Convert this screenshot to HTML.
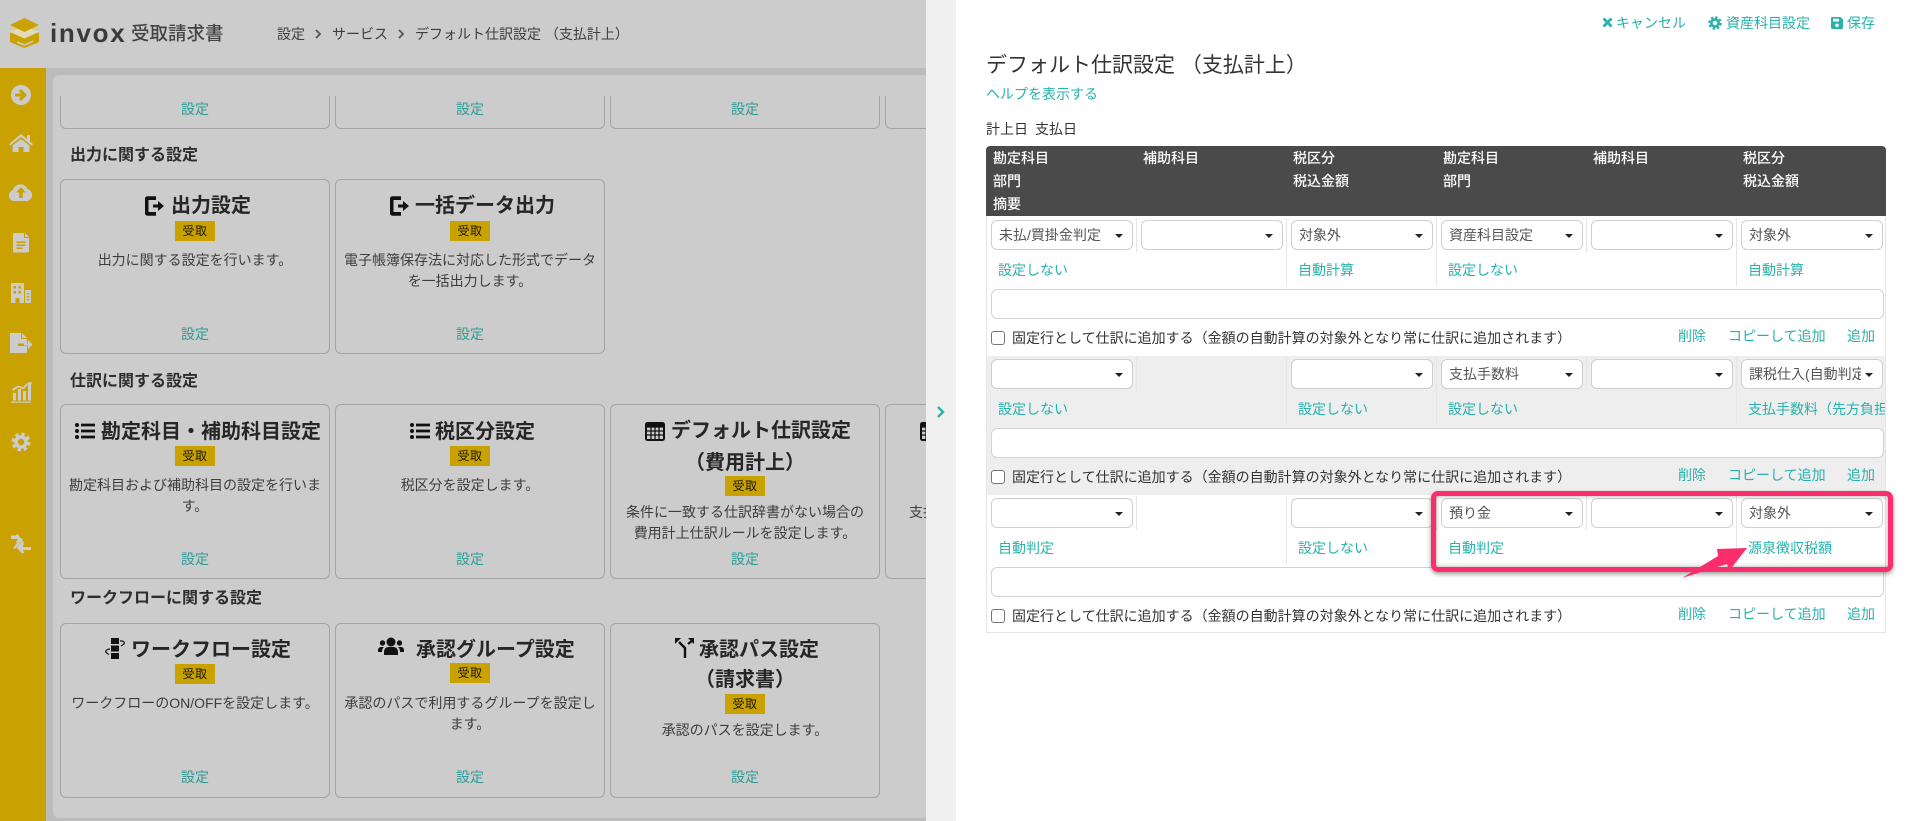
<!DOCTYPE html>
<html lang="ja"><head><meta charset="utf-8"><title>デフォルト仕訳設定</title>
<style>
*{box-sizing:border-box}
html,body{margin:0;padding:0}
body{width:1913px;height:821px;overflow:hidden;position:relative;background:#fff;font-family:"Liberation Sans","Noto Sans CJK JP",sans-serif;font-size:14px;color:#333}
body div,body span.a,body svg.a{position:absolute}
.t{white-space:nowrap;line-height:20px;height:20px}
.card{width:270px;border:1px solid #a3a3a3;border-radius:6px}
.top{border-top:0;border-radius:0 0 6px 6px}
.h{font-size:16px;font-weight:700;color:#2e2e2e;white-space:nowrap;line-height:24px}
.ti{font-size:20px;font-weight:700;color:#262626;white-space:nowrap;line-height:30px}
.ctr{text-align:center;width:270px}
.ba{width:40px;height:20px;background:#c9a200;color:#1c1800;font-size:12px;line-height:20px;text-align:center;letter-spacing:.5px}
.de{font-size:14px;line-height:21px;color:#3d3d3d;text-align:center;width:270px;white-space:nowrap}
.ln{font-size:14px;line-height:20px;color:#2d9c97;text-align:center;width:270px}
.l{color:#27b2ab;font-size:14px;line-height:20px;white-space:nowrap}
.s{width:142px;height:30px;background:#fff;border:1px solid #cfcfcf;border-radius:6px;color:#555;line-height:29px;padding-left:7px;white-space:nowrap;overflow:hidden}
.s::after{content:"";position:absolute;right:9px;top:13px;border-left:4px solid transparent;border-right:4px solid transparent;border-top:4.500px solid #222}
.in{left:991px;width:893px;height:30px;background:#fff;border:1px solid #cfd3d6;border-radius:6px}
.cb{left:991px;width:14px;height:14px;background:#fff;border:1px solid #767676;border-radius:3px}
.lb{left:1012px;white-space:nowrap;line-height:20px;color:#333}
.sp{width:1px;background:#e6e6e6}
.hd{color:#fff;font-weight:500;line-height:20px;white-space:nowrap}
</style></head><body>

<!-- left dimmed page -->
<div style="left:0;top:0;width:926px;height:821px;background:#ccc;overflow:hidden">
  <div style="left:0;top:68px;width:926px;height:753px;background:#bbb"></div>
  <div style="left:0;top:68px;width:46px;height:753px;background:#c9a100"></div>
  <div style="left:53px;top:75px;width:900px;height:743px;background:#ccc;border-radius:6px 0 0 6px"></div>

  <!-- logo -->
  <svg class="a" style="left:8px;top:15px" width="36" height="36" viewBox="8 15 36 36">
    <path d="M10 33l14.5-6 14.5 6v9l-14.5 6-14.5-6z" fill="#c9a100"/>
    <path d="M10 29l14.500-6.500L39 29l-14.500 7z" fill="#d9c98a"/>
    <path d="M10 32l14.500-6L39 32l-14.500 6.500z" fill="#e2dbb8"/>
    <path d="M10 25l14.500-7L39 25l-14.500 7z" fill="#c9a100"/>
    <path d="M17 42l7.500 3 9-4" fill="none" stroke="#ccc" stroke-width="1.500"/>
  </svg>
  <div class="t" style="left:50px;top:16px;font-size:26px;line-height:34px;height:34px;font-weight:700;color:#3a3a3a;letter-spacing:1.700px">invox</div>
  <div class="t" style="left:131px;top:22px;font-size:18.500px;line-height:24px;height:24px;color:#444;font-weight:500">受取請求書</div>
  <div class="t" style="left:277px;top:24px;color:#3d3d3d">設定</div>
  <div class="t" style="left:332px;top:24px;color:#3d3d3d">サービス</div>
  <div class="t" style="left:415px;top:24px;color:#3d3d3d">デフォルト仕訳設定 （支払計上）</div>
  <svg class="a" style="left:314px;top:28px" width="8" height="12" viewBox="0 0 8 12"><path d="M2 2l4 4-4 4" fill="none" stroke="#555" stroke-width="1.800"/></svg>
  <svg class="a" style="left:397px;top:28px" width="8" height="12" viewBox="0 0 8 12"><path d="M2 2l4 4-4 4" fill="none" stroke="#555" stroke-width="1.800"/></svg>

  <!-- sidebar icons -->
  <svg class="a" style="left:0;top:68px" width="46" height="500" viewBox="0 68 46 500">
    <g fill="#ccc">
      <path fill-rule="evenodd" d="M21 85a10 10 0 1 0 0 20 10 10 0 0 0 0-20zM21 89l6 6-6 6-2-2 2-2.500h-6v-3h6l-2-2.500z"/>
      <path d="M21 134l6 5v-4h3v6.500l3 2.500-1.300 1.500L21 137l-10.700 8.500L9 144z"/>
      <path d="M21 139l8.500 6.500V152h-6v-5h-5v5h-6v-6.500z"/>
      <path fill-rule="evenodd" d="M14 201a5.500 5.500 0 0 1-1.500-10.700A8 8 0 0 1 27.500 189a6.200 6.200 0 0 1 0 12zM21 187l-5 5.500h3.200v5.500h3.600v-5.500H26z"/>
      <path fill-rule="evenodd" d="M14.500 233H24v5h5v13a1.500 1.500 0 0 1-1.500 1.500h-13A1.500 1.500 0 0 1 13 251v-16.500a1.500 1.500 0 0 1 1.500-1.500zM16.500 241.500v1.500h9v-1.500zM16.500 244.500v1.500h9v-1.500zM16.500 247.500v1.500h6v-1.500z"/>
      <path d="M25 233l4 4h-4z"/>
      <path fill-rule="evenodd" d="M11 283h13v20h-4.500v-5h-4v5H11zM13.500 286v2.500H16V286zM18.500 286v2.500H21V286zM13.500 291v2.500H16V291zM18.500 291v2.500H21V291z"/>
      <path fill-rule="evenodd" d="M25 290h6v13h-6zM26.800 293v1.400h2.400V293zM26.800 296v1.400h2.400V296zM26.800 299v1.400h2.400V299z"/>
      <path d="M10 333h11v6h6v4.500h-9v2.500h9v7H10z"/>
      <path d="M22 333l5 5h-5zM24 343.500h4V340l4.500 4.500L28 349v-3.500h-4z"/>
      <path d="M11 401.500h20v1.200H11zM13 393h3v7.500h-3zM18 389h3v11.500h-3zM23 391h3v9.500h-3zM28 385h3v15.500h-3z"/>
      <path d="M12 389l6-3.500 5 1.800 5-4.800 1 1.200-5.700 5.500-5-1.800L13 391z"/>
      <circle cx="30" cy="383.500" r="1.700"/>
      <path d="M11 535.500v3.500h7l-2.500 3.500h4l4-.5-6-8-2 1.500zM31 547v3h-8l1 3-2 .5-5.500-6 5.500-6 2 1-1 4.500z"/>
      <path d="M13 548l8-10 2 1-8 10z"/>
    </g>
    <circle cx="21" cy="442" r="7.800" fill="none" stroke="#ccc" stroke-width="3.400" stroke-dasharray="3.400 2.730"/>
    <circle cx="21" cy="442" r="5" fill="none" stroke="#ccc" stroke-width="3.600"/>
  </svg>

  <!-- row 0 -->
  <div class="card top" style="left:60px;top:96px;height:33px"></div>
  <div class="card top" style="left:335px;top:96px;height:33px"></div>
  <div class="card top" style="left:610px;top:96px;height:33px"></div>
  <div class="card top" style="left:885px;top:96px;height:33px"></div>
  <div class="ln" style="left:60px;top:99px">設定</div>
  <div class="ln" style="left:335px;top:99px">設定</div>
  <div class="ln" style="left:610px;top:99px">設定</div>

  <!-- output section -->
  <div class="h" style="left:70px;top:144px">出力に関する設定</div>
  <div class="card" style="left:60px;top:179px;height:175px"></div>
  <div class="card" style="left:335px;top:179px;height:175px"></div>
  <svg class="a" style="left:145px;top:196px" width="20" height="20" viewBox="0 0 20 20"><path d="M11 1.500H2.500a1.500 1.500 0 0 0-1.500 1.500v14a1.500 1.500 0 0 0 1.500 1.500H11" fill="#111" stroke="#111" stroke-width="2.400"/><path d="M3.500 4h8v12h-8z" fill="#ccc"/><path d="M8 8.500h5V5l6 5-6 5v-3.500H8z" fill="#111"/></svg>
  <div class="ti" style="left:171px;top:191px">出力設定</div>
  <svg class="a" style="left:390px;top:196px" width="20" height="20" viewBox="0 0 20 20"><path d="M11 1.500H2.500a1.500 1.500 0 0 0-1.500 1.500v14a1.500 1.500 0 0 0 1.500 1.500H11" fill="#111" stroke="#111" stroke-width="2.400"/><path d="M3.500 4h8v12h-8z" fill="#ccc"/><path d="M8 8.500h5V5l6 5-6 5v-3.500H8z" fill="#111"/></svg>
  <div class="ti" style="left:415px;top:191px">一括データ出力</div>
  <div class="ba" style="left:175px;top:221px">受取</div>
  <div class="ba" style="left:450px;top:221px">受取</div>
  <div class="de" style="left:60px;top:250px">出力に関する設定を行います。</div>
  <div class="de" style="left:335px;top:250px">電子帳簿保存法に対応した形式でデータ<br>を一括出力します。</div>
  <div class="ln" style="left:60px;top:324px">設定</div>
  <div class="ln" style="left:335px;top:324px">設定</div>

  <!-- journal section -->
  <div class="h" style="left:70px;top:370px">仕訳に関する設定</div>
  <div class="card" style="left:60px;top:404px;height:175px"></div>
  <div class="card" style="left:335px;top:404px;height:175px"></div>
  <div class="card" style="left:610px;top:404px;height:175px"></div>
  <div class="card" style="left:885px;top:404px;height:175px"></div>
  <svg class="a" style="left:75px;top:423px" width="20" height="16" viewBox="0 0 20 16"><path fill="#111" d="M0 2a2 2 0 1 1 4 0 2 2 0 0 1-4 0zM0 8a2 2 0 1 1 4 0 2 2 0 0 1-4 0zM0 14a2 2 0 1 1 4 0 2 2 0 0 1-4 0z"/><path fill="#111" d="M6 .6h14v2.800H6zM6 6.600h14v2.800H6zM6 12.600h14v2.800H6z"/></svg>
  <div class="ti" style="left:101px;top:417px">勘定科目・補助科目設定</div>
  <svg class="a" style="left:410px;top:423px" width="20" height="16" viewBox="0 0 20 16"><path fill="#111" d="M0 2a2 2 0 1 1 4 0 2 2 0 0 1-4 0zM0 8a2 2 0 1 1 4 0 2 2 0 0 1-4 0zM0 14a2 2 0 1 1 4 0 2 2 0 0 1-4 0z"/><path fill="#111" d="M6 .6h14v2.800H6zM6 6.600h14v2.800H6zM6 12.600h14v2.800H6z"/></svg>
  <div class="ti" style="left:435px;top:417px">税区分設定</div>
  <svg class="a" style="left:645px;top:421px" width="20" height="20" viewBox="0 0 20 20"><rect x="0" y="1" width="20" height="19" rx="2.500" fill="#111"/><path d="M2 6h16v12H2z" fill="#ccc"/><path d="M2 6h16M2 10h16M2 14h16M6 6v12M10 6v12M14 6v12" stroke="#111" stroke-width="1.300"/></svg>
  <div class="ti" style="left:671px;top:416px">デフォルト仕訳設定</div>
  <div class="ti ctr" style="left:610px;top:448px">（費用計上）</div>
  <svg class="a" style="left:920px;top:421px" width="20" height="20" viewBox="0 0 20 20"><rect x="0" y="1" width="20" height="19" rx="2.500" fill="#111"/><path d="M2 6h16v12H2z" fill="#ccc"/><path d="M2 6h16M2 10h16M2 14h16M6 6v12M10 6v12M14 6v12" stroke="#111" stroke-width="1.300"/></svg>
  <div class="ba" style="left:175px;top:446px">受取</div>
  <div class="ba" style="left:450px;top:446px">受取</div>
  <div class="ba" style="left:725px;top:476px">受取</div>
  <div class="de" style="left:60px;top:475px">勘定科目および補助科目の設定を行いま<br>す。</div>
  <div class="de" style="left:335px;top:475px">税区分を設定します。</div>
  <div class="de" style="left:610px;top:502px">条件に一致する仕訳辞書がない場合の<br>費用計上仕訳ルールを設定します。</div>
  <div class="t" style="left:909px;top:502px;color:#3d3d3d">支払</div>
  <div class="ln" style="left:60px;top:549px">設定</div>
  <div class="ln" style="left:335px;top:549px">設定</div>
  <div class="ln" style="left:610px;top:549px">設定</div>

  <!-- workflow section -->
  <div class="h" style="left:70px;top:587px">ワークフローに関する設定</div>
  <div class="card" style="left:60px;top:623px;height:175px"></div>
  <div class="card" style="left:335px;top:623px;height:175px"></div>
  <div class="card" style="left:610px;top:623px;height:175px"></div>
  <svg class="a" style="left:104px;top:638px" width="22" height="21" viewBox="0 0 22 21"><path fill="#111" d="M7 0h8v6H7zM7 7.500h8v6H7zM7 15h8v6H7z"/><path d="M16 3c3-.5 5 1 4 3l-3 2M6 11c-3 0-5 2-4 3.500l3 2" fill="none" stroke="#111" stroke-width="1.200"/></svg>
  <div class="ti" style="left:131px;top:635px">ワークフロー設定</div>
  <svg class="a" style="left:378px;top:637px" width="26" height="19" viewBox="0 0 26 19"><g fill="#111"><circle cx="13" cy="5" r="4.500"/><circle cx="4.500" cy="6" r="2.700"/><circle cx="21.500" cy="6" r="2.700"/><path d="M6 18v-3c0-3 2-5 4.500-5h5c2.500 0 4.500 2 4.500 5v3z"/><path d="M0 15v-2c0-1.800 1.500-3 3-3h3c-1.500 1-2 3-2 5zM26 15v-2c0-1.800-1.500-3-3-3h-3c1.500 1 2 3 2 5z"/></g></svg>
  <div class="ti" style="left:416px;top:635px">承認グループ設定</div>
  <svg class="a" style="left:675px;top:638px" width="20" height="20" viewBox="0 0 20 20"><path d="M10 20V10L4 4M13 6l5-4" fill="none" stroke="#111" stroke-width="2.400"/><path fill="#111" d="M0 0h6L0 6zM13 0h6v6z"/></svg>
  <div class="ti" style="left:699px;top:635px">承認パス設定</div>
  <div class="ti ctr" style="left:610px;top:665px">（請求書）</div>
  <div class="ba" style="left:175px;top:664px">受取</div>
  <div class="ba" style="left:450px;top:663px">受取</div>
  <div class="ba" style="left:725px;top:694px">受取</div>
  <div class="de" style="left:60px;top:693px">ワークフローのON/OFFを設定します。</div>
  <div class="de" style="left:335px;top:693px">承認のパスで利用するグループを設定し<br>ます。</div>
  <div class="de" style="left:610px;top:720px">承認のパスを設定します。</div>
  <div class="ln" style="left:60px;top:767px">設定</div>
  <div class="ln" style="left:335px;top:767px">設定</div>
  <div class="ln" style="left:610px;top:767px">設定</div>
</div>

<!-- handle strip -->
<div style="left:926px;top:0;width:30px;height:821px;background:#f0f0f0"></div>
<svg class="a" style="left:936px;top:405px" width="10" height="14" viewBox="0 0 10 14"><path d="M2 2l5 5-5 5" fill="none" stroke="#27b2ab" stroke-width="2.400"/></svg>

<!-- right actions -->
<svg class="a" style="left:1602px;top:17px" width="11" height="11" viewBox="0 0 11 11"><path d="M1.500 1.500l8 8M9.500 1.500l-8 8" stroke="#27b2ab" stroke-width="2.800"/></svg>
<div class="l" style="left:1616px;top:13px">キャンセル</div>
<svg class="a" style="left:1708px;top:16px" width="14" height="14" viewBox="0 0 14 14"><circle cx="7" cy="7" r="5.600" fill="none" stroke="#27b2ab" stroke-width="2.400" stroke-dasharray="2.400 2"/><circle cx="7" cy="7" r="3.600" fill="none" stroke="#27b2ab" stroke-width="2.600"/></svg>
<div class="l" style="left:1726px;top:13px">資産科目設定</div>
<svg class="a" style="left:1831px;top:17px" width="12" height="12" viewBox="0 0 12 12"><path fill="#27b2ab" fill-rule="evenodd" d="M1.200 0H9.500L12 2.500v8.300A1.200 1.200 0 0 1 10.800 12H1.200A1.200 1.200 0 0 1 0 10.800V1.200A1.200 1.200 0 0 1 1.200 0zM2 1.800v2.700h6V1.800zM6 6.500a1.800 1.800 0 1 0 0 3.600 1.800 1.800 0 0 0 0-3.600z"/></svg>
<div class="l" style="left:1847px;top:13px">保存</div>

<div class="t" style="left:986px;top:51px;font-size:21px;line-height:30px;height:30px;color:#333">デフォルト仕訳設定 （支払計上）</div>
<div class="l" style="left:986px;top:84px">ヘルプを表示する</div>
<div class="t" style="left:986px;top:119px;color:#333">計上日</div>
<div class="t" style="left:1035px;top:119px;color:#333">支払日</div>

<!-- table header -->
<div style="left:986px;top:146px;width:900px;height:70px;background:#4a4a4a;border-radius:4px 4px 0 0"></div>
<div class="hd" style="left:993px;top:148px">勘定科目</div>
<div class="hd" style="left:993px;top:171px">部門</div>
<div class="hd" style="left:993px;top:194px">摘要</div>
<div class="hd" style="left:1143px;top:148px">補助科目</div>
<div class="hd" style="left:1293px;top:148px">税区分</div>
<div class="hd" style="left:1293px;top:171px">税込金額</div>
<div class="hd" style="left:1443px;top:148px">勘定科目</div>
<div class="hd" style="left:1443px;top:171px">部門</div>
<div class="hd" style="left:1593px;top:148px">補助科目</div>
<div class="hd" style="left:1743px;top:148px">税区分</div>
<div class="hd" style="left:1743px;top:171px">税込金額</div>

<!-- table frame -->
<div class="sp" style="left:986px;top:216px;height:417px"></div>
<div class="sp" style="left:1885px;top:216px;height:417px"></div>
<div style="left:986px;top:632px;width:900px;height:1px;background:#e6e6e6"></div>
<div style="left:987px;top:356px;width:898px;height:139px;background:#eee"></div>

<!-- row 1 -->
<div class="sp" style="left:1136px;top:218px;height:34px"></div>
<div class="sp" style="left:1286px;top:218px;height:68px"></div>
<div class="sp" style="left:1436px;top:218px;height:68px"></div>
<div class="sp" style="left:1586px;top:218px;height:34px"></div>
<div class="sp" style="left:1736px;top:218px;height:68px"></div>
<div class="s" style="left:991px;top:220px">未払/買掛金判定</div>
<div class="s" style="left:1141px;top:220px"></div>
<div class="s" style="left:1291px;top:220px">対象外</div>
<div class="s" style="left:1441px;top:220px">資産科目設定</div>
<div class="s" style="left:1591px;top:220px"></div>
<div class="s" style="left:1741px;top:220px">対象外</div>
<div class="l" style="left:998px;top:260px">設定しない</div>
<div class="l" style="left:1298px;top:260px">自動計算</div>
<div class="l" style="left:1448px;top:260px">設定しない</div>
<div class="l" style="left:1748px;top:260px">自動計算</div>
<div class="in" style="top:289px"></div>
<div class="cb" style="top:331px"></div>
<div class="lb" style="top:328px">固定行として仕訳に追加する（金額の自動計算の対象外となり常に仕訳に追加されます）</div>
<div class="l" style="left:1678px;top:326px">削除</div>
<div class="l" style="left:1728px;top:326px">コピーして追加</div>
<div class="l" style="left:1847px;top:326px">追加</div>

<!-- row 2 -->
<div class="sp" style="left:1136px;top:357px;height:34px"></div>
<div class="sp" style="left:1286px;top:357px;height:68px"></div>
<div class="sp" style="left:1436px;top:357px;height:68px"></div>
<div class="sp" style="left:1586px;top:357px;height:34px"></div>
<div class="sp" style="left:1736px;top:357px;height:68px"></div>
<div class="s" style="left:991px;top:359px"></div>
<div class="s" style="left:1291px;top:359px"></div>
<div class="s" style="left:1441px;top:359px">支払手数料</div>
<div class="s" style="left:1591px;top:359px"></div>
<div class="s" style="left:1741px;top:359px"><span style="display:block;width:112px;overflow:hidden">課税仕入(自動判定</span></div>
<div class="l" style="left:998px;top:399px">設定しない</div>
<div class="l" style="left:1298px;top:399px">設定しない</div>
<div class="l" style="left:1448px;top:399px">設定しない</div>
<div class="l" style="left:1748px;top:399px;width:137px;overflow:hidden">支払手数料（先方負担）</div>
<div class="in" style="top:428px"></div>
<div class="cb" style="top:470px"></div>
<div class="lb" style="top:467px">固定行として仕訳に追加する（金額の自動計算の対象外となり常に仕訳に追加されます）</div>
<div class="l" style="left:1678px;top:465px">削除</div>
<div class="l" style="left:1728px;top:465px">コピーして追加</div>
<div class="l" style="left:1847px;top:465px">追加</div>

<!-- row 3 -->
<div class="sp" style="left:1136px;top:496px;height:34px"></div>
<div class="sp" style="left:1286px;top:496px;height:68px"></div>
<div class="sp" style="left:1436px;top:496px;height:34px"></div>
<div class="sp" style="left:1586px;top:496px;height:34px"></div>
<div class="sp" style="left:1736px;top:496px;height:68px"></div>
<div class="s" style="left:991px;top:498px"></div>
<div class="s" style="left:1291px;top:498px"></div>
<div class="s" style="left:1441px;top:498px">預り金</div>
<div class="s" style="left:1591px;top:498px"></div>
<div class="s" style="left:1741px;top:498px">対象外</div>
<div class="l" style="left:998px;top:538px">自動判定</div>
<div class="l" style="left:1298px;top:538px">設定しない</div>
<div class="l" style="left:1448px;top:538px">自動判定</div>
<div class="l" style="left:1748px;top:538px">源泉徴収税額</div>
<div class="in" style="top:567px"></div>
<div class="cb" style="top:609px"></div>
<div class="lb" style="top:606px">固定行として仕訳に追加する（金額の自動計算の対象外となり常に仕訳に追加されます）</div>
<div class="l" style="left:1678px;top:604px">削除</div>
<div class="l" style="left:1728px;top:604px">コピーして追加</div>
<div class="l" style="left:1847px;top:604px">追加</div>

<!-- highlight -->
<div style="left:1431px;top:491px;width:462px;height:81px;border:5.500px solid #fb2d6c;border-radius:7px;box-shadow:0 2px 5px rgba(0,0,0,.4),inset 0 0 5px rgba(0,0,0,.35)"></div>
<svg class="a" style="left:1675px;top:540px" width="80" height="45" viewBox="1675 540 80 45"><path d="M1682 578L1718 556 1717 549 1747 548 1729 571 1727 564z" fill="#fb2d6c"/></svg>
</body></html>
